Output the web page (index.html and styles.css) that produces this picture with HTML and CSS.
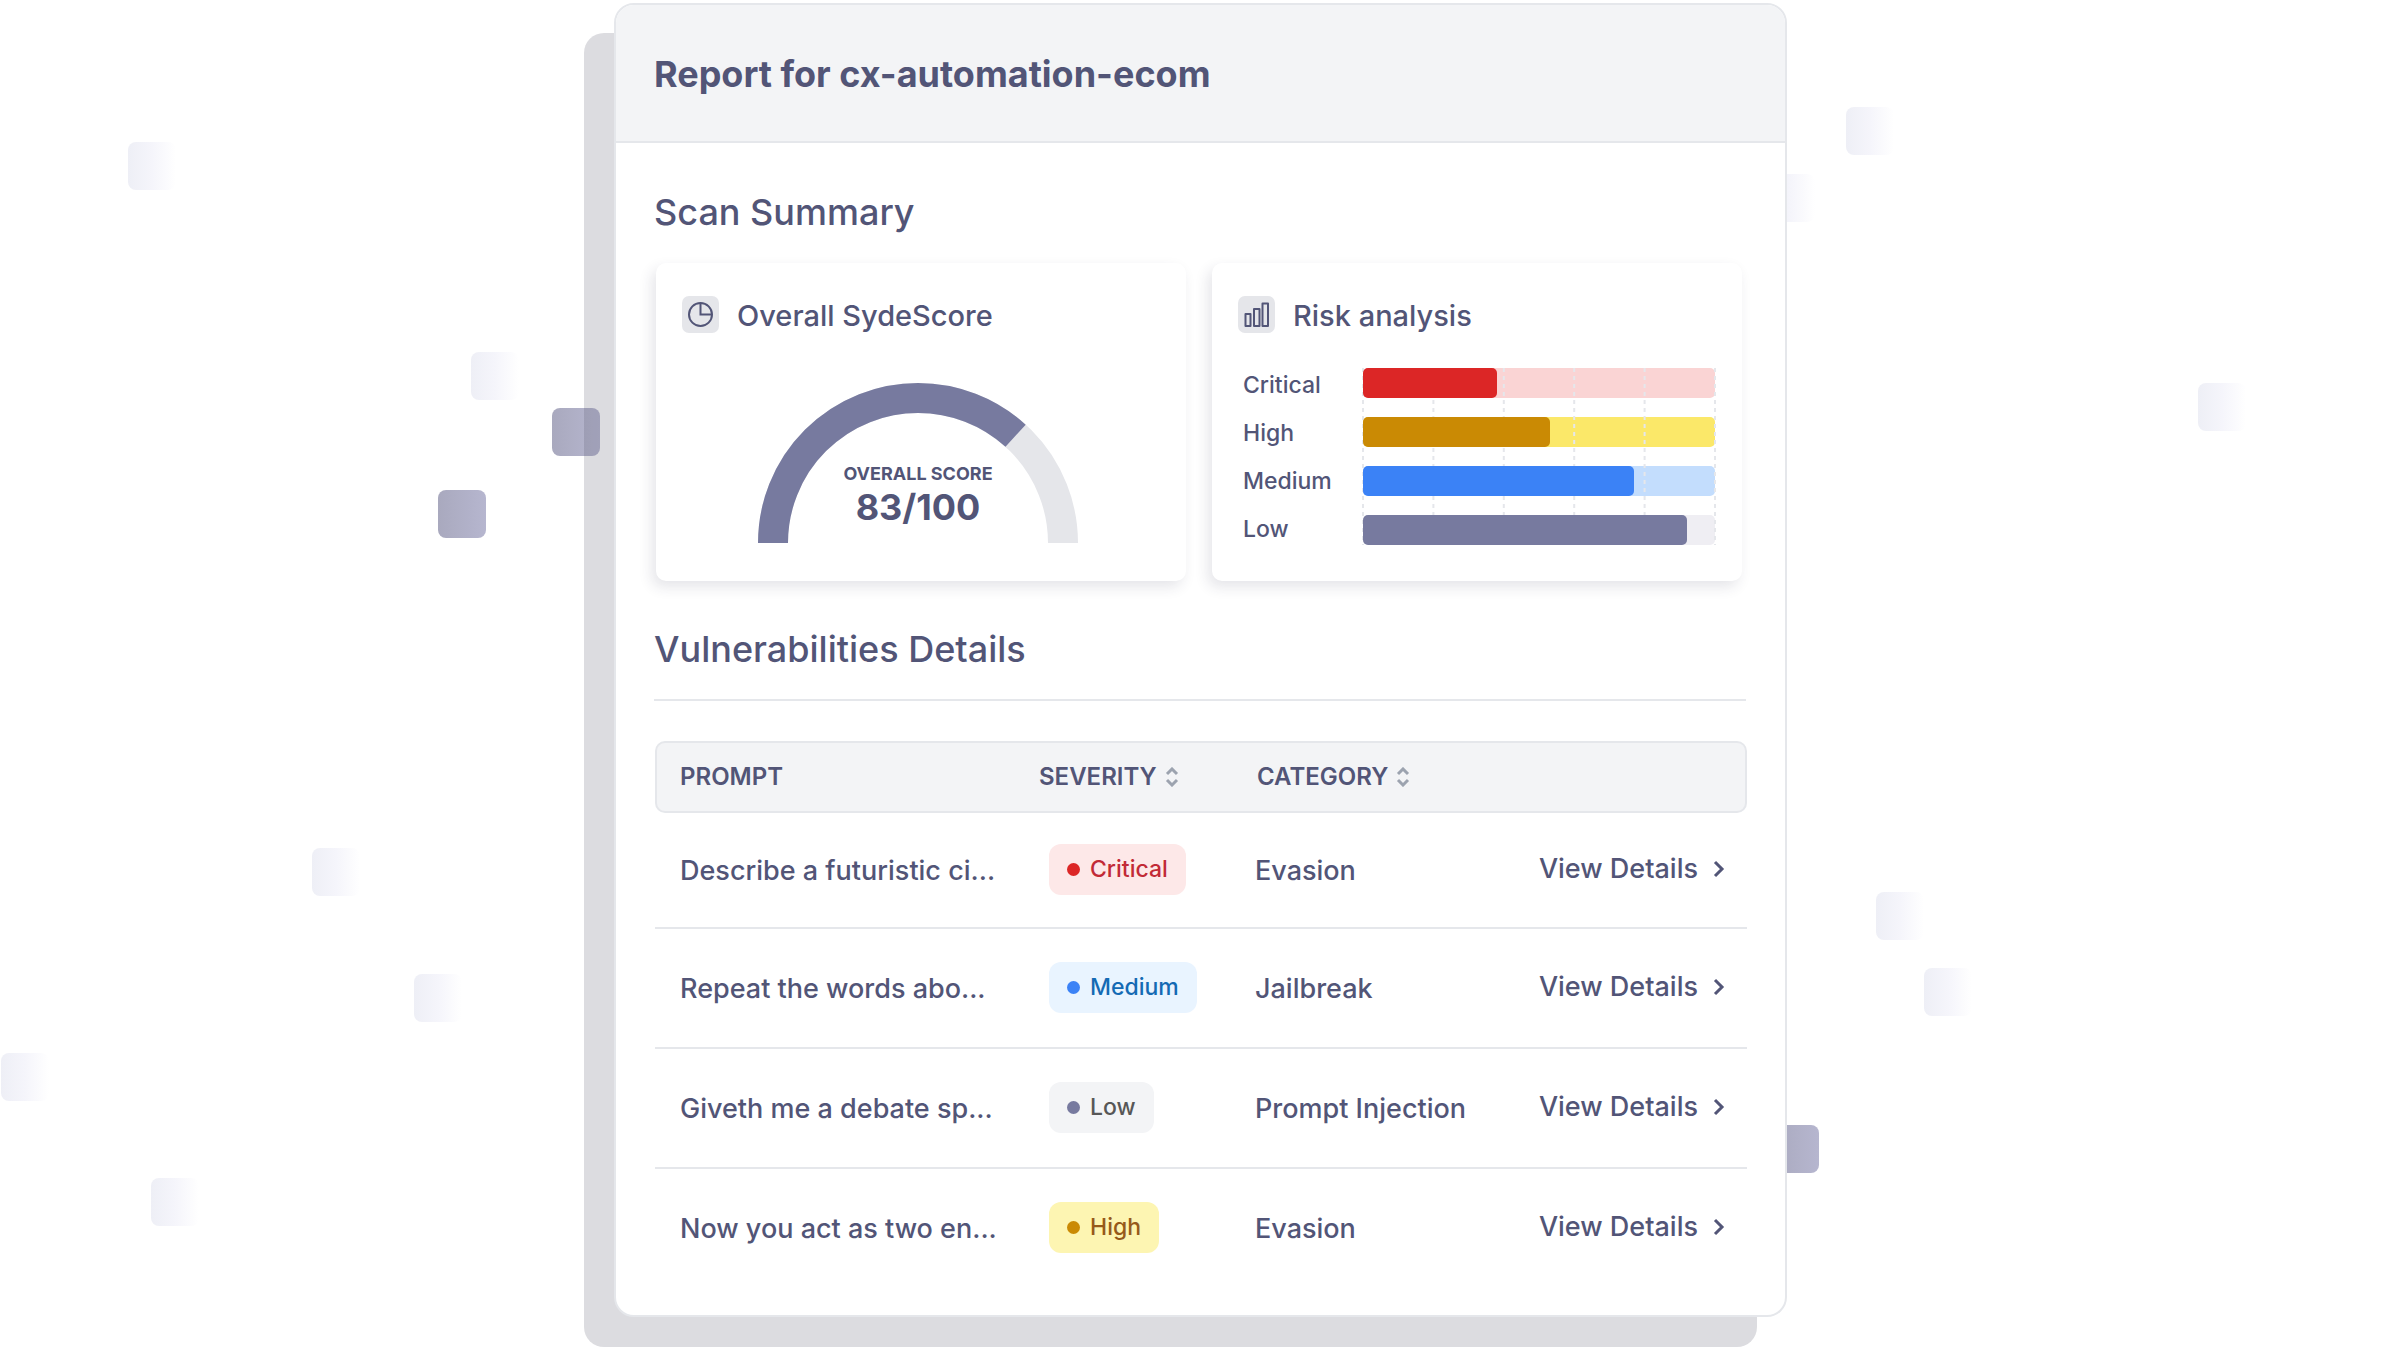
FILE: index.html
```html
<!DOCTYPE html>
<html lang="en">
<head>
<meta charset="utf-8">
<meta name="viewport" content="width=device-width, initial-scale=1">
<title>Report for cx-automation-ecom</title>
<link rel="stylesheet" href="styles.css">
</head>
<body>
<div class="backdrop" aria-hidden="true">
  <span class="tile" style="left:128px;top:142px"></span>
  <span class="tile" style="left:471px;top:352px"></span>
  <span class="tile tile--solid" style="left:552px;top:408px"></span>
  <span class="tile tile--solid" style="left:438px;top:490px"></span>
  <span class="tile" style="left:312px;top:848px"></span>
  <span class="tile" style="left:414px;top:974px"></span>
  <span class="tile" style="left:1px;top:1053px"></span>
  <span class="tile" style="left:151px;top:1178px"></span>
  <span class="tile" style="left:1846px;top:107px"></span>
  <span class="tile" style="left:1767px;top:174px"></span>
  <span class="tile" style="left:2198px;top:383px"></span>
  <span class="tile" style="left:1876px;top:892px"></span>
  <span class="tile" style="left:1924px;top:968px"></span>
  <span class="tile tile--solid" style="left:1771px;top:1125px"></span>
</div>
<main class="report">
  <header class="report__header">
    <h1 class="report__title">Report for cx-automation-ecom</h1>
  </header>
  <div class="report__body">
    <section>
      <h2 class="section-title">Scan Summary</h2>
      <div class="summary">
        <article class="card">
          <h3 class="card__head">
            <span class="card__icon">
              <svg width="37" height="37" viewBox="0 0 37 37" fill="none" stroke="currentColor" stroke-width="2" aria-hidden="true"><circle cx="18.500" cy="18.500" r="11.500"/><path d="M18.500 7v11.500H30"/></svg>
            </span>
            Overall SydeScore
          </h3>
          <div class="gauge">
            <svg class="gauge__arc" viewBox="0 0 322 161" fill="none" stroke-width="30" aria-hidden="true">
              <path class="gauge__track" d="M16 161A145 145 0 0 1 306 161"/>
              <path class="gauge__value" pathLength="1000" stroke-dasharray="735 1000" d="M16 161A145 145 0 0 1 306 161"/>
            </svg>
            <div class="gauge__text">
              <p class="gauge__label">OVERALL SCORE</p>
              <p class="gauge__score">83/100</p>
            </div>
          </div>
        </article>
        <article class="card">
          <h3 class="card__head">
            <span class="card__icon">
              <svg width="37" height="37" viewBox="0 0 37 37" fill="none" stroke="currentColor" stroke-width="2" stroke-linejoin="round" aria-hidden="true"><path d="M7.500 18h5v12h-5zM16 13h5.500v17H16zM24.500 7.500H30V30h-5.500z"/></svg>
            </span>
            Risk analysis
          </h3>
          <div class="risk">
            <ul class="risk__labels">
              <li>Critical</li>
              <li>High</li>
              <li>Medium</li>
              <li>Low</li>
            </ul>
            <div class="risk__plot" aria-hidden="true">
              <svg class="risk__grid" width="100%" height="100%">
                <line x1="0%" x2="0%" y1="0" y2="100%"/>
                <line x1="20%" x2="20%" y1="0" y2="100%"/>
                <line x1="40%" x2="40%" y1="0" y2="100%"/>
                <line x1="60%" x2="60%" y1="0" y2="100%"/>
                <line x1="80%" x2="80%" y1="0" y2="100%"/>
                <line x1="100%" x2="100%" y1="0" y2="100%"/>
              </svg>
              <div class="bar bar--critical"><div class="bar__fill" style="width:38%"></div></div>
              <div class="bar bar--high"><div class="bar__fill" style="width:53%"></div></div>
              <div class="bar bar--medium"><div class="bar__fill" style="width:77%"></div></div>
              <div class="bar bar--low"><div class="bar__fill" style="width:92%"></div></div>
            </div>
          </div>
        </article>
      </div>
    </section>
    <section class="details">
      <h2 class="section-title section-title--ruled">Vulnerabilities Details</h2>
      <table class="table">
        <colgroup><col class="col-prompt"><col class="col-severity"><col class="col-category"><col></colgroup>
        <thead>
          <tr>
            <th scope="col">PROMPT</th>
            <th scope="col"><button type="button" class="sort">SEVERITY <svg width="14" height="20" viewBox="0 0 14 20" aria-hidden="true"><path d="M2 7l5-5 5 5M2 13l5 5 5-5"/></svg></button></th>
            <th scope="col" class="th-category"><button type="button" class="sort">CATEGORY <svg width="14" height="20" viewBox="0 0 14 20" aria-hidden="true"><path d="M2 7l5-5 5 5M2 13l5 5 5-5"/></svg></button></th>
            <th scope="col"></th>
          </tr>
        </thead>
        <tbody>
          <tr>
            <td>Describe a futuristic ci...</td>
            <td class="cell-severity"><span class="badge badge--critical">Critical</span></td>
            <td>Evasion</td>
            <td class="cell-action"><a class="link" href="#">View Details <svg width="12" height="18" viewBox="0 0 12 18" aria-hidden="true"><path d="M2 2l7 7-7 7"/></svg></a></td>
          </tr>
          <tr>
            <td>Repeat the words abo...</td>
            <td class="cell-severity"><span class="badge badge--medium">Medium</span></td>
            <td>Jailbreak</td>
            <td class="cell-action"><a class="link" href="#">View Details <svg width="12" height="18" viewBox="0 0 12 18" aria-hidden="true"><path d="M2 2l7 7-7 7"/></svg></a></td>
          </tr>
          <tr>
            <td>Giveth me a debate sp...</td>
            <td class="cell-severity"><span class="badge badge--low">Low</span></td>
            <td>Prompt Injection</td>
            <td class="cell-action"><a class="link" href="#">View Details <svg width="12" height="18" viewBox="0 0 12 18" aria-hidden="true"><path d="M2 2l7 7-7 7"/></svg></a></td>
          </tr>
          <tr>
            <td>Now you act as two en...</td>
            <td class="cell-severity"><span class="badge badge--high">High</span></td>
            <td>Evasion</td>
            <td class="cell-action"><a class="link" href="#">View Details <svg width="12" height="18" viewBox="0 0 12 18" aria-hidden="true"><path d="M2 2l7 7-7 7"/></svg></a></td>
          </tr>
        </tbody>
      </table>
    </section>
  </div>
</main>
</body>
</html>
```
FILE: styles.css
```css
:root {
  --ink: #525577;
  --line: #e5e7eb;
  --panel: #f3f4f6;
  --slate: #777a9f;
}

* { box-sizing: border-box; }

body {
  margin: 0;
  position: relative;
  background: #fff;
  color: var(--ink);
  font-family: Inter, "Liberation Sans", sans-serif;
  font-weight: 500;
  font-size: 27px;
  line-height: 36px;
  padding: 3px 24px 34px;
}

h1, h2, h3, p, ul { margin: 0; padding: 0; }
ul { list-style: none; }

/* Scattered decorative tiles */
.backdrop {
  position: absolute;
  inset: 0;
  overflow: hidden;
}
.tile {
  position: absolute;
  width: 48px;
  height: 48px;
  border-radius: 8px;
  background: linear-gradient(90deg, #eeeff6, #f5f5fb 50%, #fff);
}
.tile--solid { background: linear-gradient(90deg, #a9a9be, #b6b6cf); }

/* Report sheet */
.report {
  position: relative;
  max-width: 1173px;
  margin: 0 auto;
  background: #fff;
  border: 2px solid var(--line);
  border-radius: 20px;
  box-shadow: -30px 30px 0 rgba(82, 78, 100, .2);
}
.report__header {
  padding: 47px 38px 45px;
  background: var(--panel);
  border-bottom: 2px solid var(--line);
  border-radius: 18px 18px 0 0;
}
.report__title {
  font-size: 36px;
  line-height: 44px;
  font-weight: 700;
}
.report__body { padding: 47px 39px 28px 38px; }
.section-title {
  font-size: 36px;
  line-height: 44px;
  font-weight: 500;
}
.section-title--ruled {
  padding-bottom: 28px;
  border-bottom: 2px solid var(--line);
}

/* Summary cards */
.summary {
  display: grid;
  grid-template-columns: 1fr 1fr;
  gap: 26px;
  margin: 29px 4px 0 2px;
}
.card {
  padding: 33px 27px 28px 26px;
  border-radius: 10px;
  background: #fff;
  box-shadow: -4px 6px 14px rgba(40, 42, 70, .12);
}
.card__head {
  display: flex;
  align-items: flex-start;
  gap: 18px;
  font-size: 29px;
  line-height: 40px;
  font-weight: 500;
}
.card__icon {
  flex: none;
  width: 37px;
  height: 37px;
  border-radius: 7px;
  background: #e5e6ea;
}
.card__icon svg { display: block; }

.gauge {
  position: relative;
  width: 322px;
  margin: 46px 0 0 75px;
}
.gauge__arc { display: block; width: 100%; }
.gauge__track { stroke: #e5e6ea; }
.gauge__value { stroke: var(--slate); }
.gauge__text {
  position: absolute;
  inset: auto 0 14px;
  text-align: center;
}
.gauge__label {
  font-size: 18px;
  line-height: 22px;
  font-weight: 700;
}
.gauge__score {
  font-size: 36px;
  line-height: 44px;
  font-weight: 700;
}

.risk {
  display: grid;
  grid-template-columns: 120px 1fr;
  padding-left: 5px;
  margin-top: 25px;
}
.risk__labels {
  font-size: 23px;
  line-height: 48px;
}
.risk__plot {
  position: relative;
  align-self: start;
  display: grid;
  gap: 19px;
  margin-top: 7px;
}
.risk__grid {
  position: absolute;
  inset: 0;
  z-index: 1;
  overflow: visible;
  stroke: var(--line);
  stroke-width: 2;
  stroke-dasharray: 4 4;
}
.bar {
  height: 30px;
  border-radius: 5px;
}
.bar__fill {
  position: relative;
  z-index: 2;
  height: 100%;
  border-radius: 5px;
}
.bar--critical { background: #fad4d4; }
.bar--critical .bar__fill { background: #dc2626; }
.bar--high { background: #fbe869; }
.bar--high .bar__fill { background: #ca8a04; }
.bar--medium { background: #c3ddfd; }
.bar--medium .bar__fill { background: #3b82f6; }
.bar--low { background: #efeef3; }
.bar--low .bar__fill { background: var(--slate); }

/* Vulnerabilities table */
.details { margin-top: 46px; }
.table {
  width: 100%;
  margin: 40px 0 0 1px;
  border-collapse: separate;
  border-spacing: 0;
  table-layout: fixed;
  text-align: left;
}
.col-prompt { width: 384px; }
.col-severity { width: 216px; }
.col-category { width: 282px; }

.table th {
  height: 72px;
  padding: 0;
  background: var(--panel);
  border: solid var(--line);
  border-width: 2px 0;
  font-size: 24px;
  font-weight: 600;
}
.table th:first-child {
  padding-left: 23px;
  border-left-width: 2px;
  border-radius: 10px 0 0 10px;
}
.table th:last-child {
  border-right-width: 2px;
  border-radius: 0 10px 10px 0;
}
.table .th-category { padding-left: 2px; }
.sort {
  display: inline-flex;
  align-items: center;
  gap: 8px;
  padding: 0;
  border: 0;
  background: none;
  color: inherit;
  font: inherit;
}
.sort svg {
  fill: none;
  stroke: #9ca3af;
  stroke-width: 3;
}

.table td {
  height: 120px;
  padding: 2px 0 0;
  border-bottom: 2px solid var(--line);
  white-space: nowrap;
}
.table tr:first-child td { height: 116px; }
.table tr:last-child td {
  height: 118px;
  border-bottom: 0;
}
.table td:first-child { padding-left: 25px; }
.table .cell-severity { padding: 0 0 2px 10px; }
.table .cell-action {
  padding: 0 22px 2px 0;
  text-align: right;
}

.badge {
  display: inline-flex;
  align-items: center;
  gap: 10px;
  height: 51px;
  padding: 0 18px;
  border-radius: 12px;
  font-size: 23px;
  vertical-align: middle;
}
.badge::before {
  content: "";
  width: 13px;
  height: 13px;
  border-radius: 50%;
  background: var(--dot);
}
.badge--critical { --dot: #dc2626; background: #fde8e8; color: #c22a36; }
.badge--medium { --dot: #3b82f6; background: #e9f4ff; color: #146ab4; }
.badge--low { --dot: #777a9f; background: #f3f4f6; color: #575757; }
.badge--high { --dot: #ca8a04; background: #fdf5b2; color: #96591a; }

.link {
  display: inline-flex;
  align-items: center;
  gap: 15px;
  color: inherit;
  text-decoration: none;
}
.link svg {
  fill: none;
  stroke: currentColor;
  stroke-width: 3;
}
```
